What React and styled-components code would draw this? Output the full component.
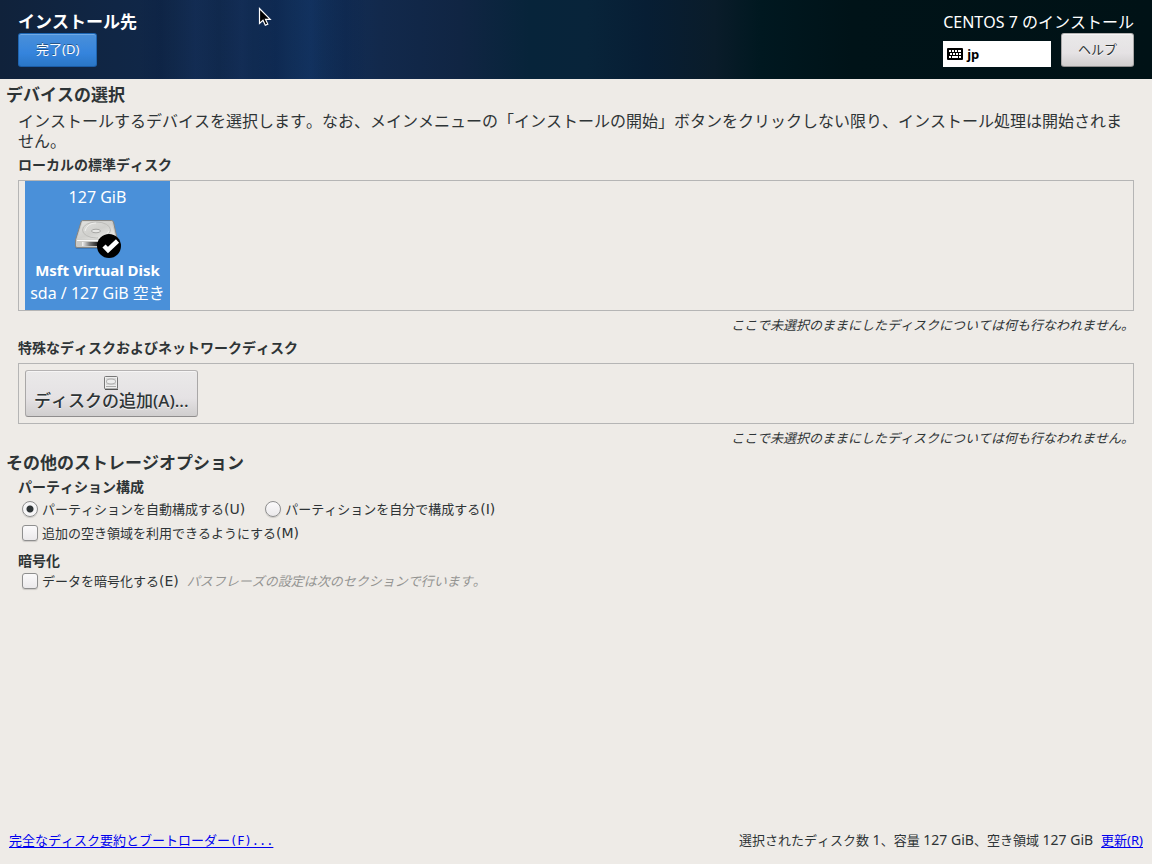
import React, { useState } from "react";
import styled, { createGlobalStyle, css } from "styled-components";

const GlobalStyle = createGlobalStyle`
  *, *::before, *::after { box-sizing: border-box; }
  body {
    margin: 0;
    background: #eeebe7;
    color: #2e3436;
    font-family: "Noto Sans", "Noto Sans CJK JP", sans-serif;
    font-size: 13px;
    font-kerning: none;
    line-height: 20px;
  }
  button, input { font: inherit; color: inherit; margin: 0; font-kerning: inherit; }
`;

const Page = styled.div`
  min-height: 100vh;
  display: flex;
  flex-direction: column;
`;

const Header = styled.header`
  position: relative;
  display: flex;
  justify-content: space-between;
  min-height: 79px;
  padding: 11px 18px 12px;
  color: #fff;
  background:
    linear-gradient(90deg, transparent 12%, rgba(0, 16, 50, 0.12) 14%, transparent 15%, rgba(50, 90, 170, 0.08) 17%, transparent 19%, rgba(50, 80, 150, 0.08) 21%, transparent 22%, rgba(0, 20, 60, 0.12) 24%, transparent 25%, rgba(50, 90, 170, 0.06) 27%, transparent 28%, rgba(0, 20, 60, 0.12) 30%, transparent 32%),
    linear-gradient(90deg, #10223b 0, #102645 10%, #10294e 20%, #102f5a 27%, #12294c 33%, #102543 40%, #07243a 46%, #08243a 51%, #071e34 56%, #0a1c2a 62%, #001820 66%, #001318 74%, #001216 100%);
`;

const HeaderSide = styled.div`
  display: flex;
  flex-direction: column;
  align-items: flex-start;
`;

const PageTitle = styled.h1`
  margin: 0;
  font-size: 17px;
  line-height: 22px;
  font-weight: 700;
`;

const ProductName = styled.div`
  font-size: 16px;
  line-height: 22px;
`;

const HeaderControls = styled.div`
  display: flex;
  align-self: stretch;
  align-items: flex-end;
  justify-content: space-between;
  gap: 9px;
`;

const variants = {
  primary: css`
    padding: 0 17px 2px;
    color: #fff;
    border-color: #1c66b4 #1f65b0 #1b5ca6;
    background: linear-gradient(#4a90d9, #3584dd 60%, #2a76c6);
    box-shadow: inset 0 1px #70aae6;
    text-shadow: 0 -1px rgba(0, 0, 0, 0.4);
  `,
  plain: css`
    padding: 0 16px 2px;
    color: #2e3436;
    border-color: #b5b3b3 #a9a7a7 #8f8d8d;
    background: linear-gradient(#eae9e9, #e5e2e4 60%, #d0cece);
    box-shadow: inset 0 1px #f6f5f5;
    text-shadow: 0 1px rgba(255, 255, 255, 0.7);
  `,
};

const Button = styled.button`
  height: 34px;
  border: 1px solid;
  border-radius: 3px;
  ${({ $variant }) => variants[$variant]}
`;

const AddButton = styled(Button)`
  display: flex;
  flex-direction: column;
  align-items: center;
  height: 47px;
  padding: 4px 8px 0;
  font-size: 17px;
  font-weight: 500;
  line-height: 20px;
`;

const KeyboardLayout = styled.button`
  display: flex;
  align-items: center;
  gap: 4px;
  width: 108px;
  height: 26px;
  padding: 0 4px;
  border: 0;
  background: #fff;
  color: #000;
  font-weight: 700;
`;

const Pointer = styled.svg`
  position: absolute;
  left: 258px;
  top: 7px;
  pointer-events: none;
`;

const Main = styled.main`
  flex: 1;
  padding: 4px 18px 20px;
`;

const SectionTitle = styled.h2`
  margin: 0 0 ${({ $gap }) => $gap}px -12px;
  font-size: 17px;
  line-height: 24px;
  font-weight: 700;
`;

const Intro = styled.p`
  margin: 0 8px 4px 0;
  font-size: 16px;
  line-height: 20px;
`;

const GroupTitle = styled.h3`
  margin: 0 0 ${({ $gap = 0 }) => $gap}px;
  font-size: 14px;
  line-height: 20px;
  font-weight: 700;
`;

const DiskArea = styled.div`
  display: flex;
  border: 1px solid #b5b5b5;
  padding: ${({ $inset = 0 }) => $inset}px 6px;
`;

const Note = styled.p`
  margin: 4px 0 3px;
  font-style: italic;
  text-align: right;
`;

const DiskCard = styled.button`
  display: flex;
  flex-direction: column;
  align-items: center;
  justify-content: flex-start;
  width: 145px;
  height: 129px;
  padding: 4px 0;
  border: 0;
  background: #4a90d9;
  color: #fff;
  font-size: 16px;
  line-height: 24px;
  white-space: nowrap;
`;

const DiskName = styled.strong`
  font-size: 15px;
  line-height: 22px;
  font-weight: 700;
`;

const OptionRow = styled.div`
  display: flex;
  align-items: center;
  min-height: ${({ $compact }) => ($compact ? 20 : 24)}px;
  padding-left: 4px;
  gap: ${({ $gap = 0 }) => $gap}px;
`;

const Option = styled.label`
  display: flex;
  align-items: center;
  gap: 4px;
`;

const Tick = styled.input`
  appearance: none;
  width: 16px;
  height: 16px;
  flex: none;
  border: 1px solid #8f8f8f;
  border-radius: ${({ type }) => (type === "radio" ? "50%" : "3px")};
  background: linear-gradient(#fbfafb, #ebe9eb);
  box-shadow: 0 1px 1px rgba(0, 0, 0, 0.15);

  &[type="radio"]:checked {
    background: radial-gradient(circle, #2e3436 0 2px, #2e3436 3px, #f6f5f6 4px);
  }
  &[type="checkbox"]:checked {
    background: linear-gradient(135deg, #2e3436, #555);
  }
`;

const Mnemonic = styled.span`
  font-family: "DejaVu Sans", sans-serif;
  font-size: 14px;
  line-height: 16px;
`;

const FixedMnemonic = styled.span`
  font-family: "DejaVu Sans Mono", monospace;
  font-size: 12px;
`;

const Figure = styled.span`
  font-size: 14px;
`;

const Hint = styled.em`
  color: #949492;
`;

const Groups = styled.section`
  display: flex;
  flex-direction: column;
  gap: 6px;
`;

const Footer = styled.footer`
  display: flex;
  justify-content: space-between;
  padding: 0 9px 13px;
`;

const Summary = styled.div`
  display: flex;
  gap: 8px;
`;

const Link = styled.a`
  color: #0000ee;
  text-underline-offset: 2px;
`;

function KeyboardIcon() {
  return (
    <svg width="16" height="12" viewBox="0 0 16 12" aria-hidden="true">
      <rect width="16" height="12" rx="1" fill="#000" />
      <path
        fill="#fff"
        d="M2 2h2v2H2zM5 2h2v2H5zM8 2h2v2H8zM11 2h3v2h-3zM3 5h2v2H3zM6 5h2v2H6zM9 5h2v2H9zM12 5h2v2h-2zM2 8h2v2H2zM5 8h6v2H5zM12 8h2v2h-2z"
      />
    </svg>
  );
}

function PointerIcon() {
  return (
    <Pointer width="14" height="20" viewBox="0 0 14 20" aria-hidden="true">
      <path d="M1.5 1.5v15l3.5-3.2 2.3 5 2.5-1.2-2.3-4.8h4.7z" fill="#000" stroke="#fff" strokeWidth="1.2" />
    </Pointer>
  );
}

function DiskIcon() {
  return (
    <svg width="50" height="50" viewBox="0 0 50 50" aria-hidden="true">
      <defs>
        <linearGradient id="diskTop" x1="0" y1="0" x2="1" y2="1">
          <stop offset="0" stopColor="#e3e3e1" />
          <stop offset=".5" stopColor="#d0d0cd" />
          <stop offset="1" stopColor="#f2f2f0" />
        </linearGradient>
        <linearGradient id="diskFront" x1="0" x2="1">
          <stop offset="0" stopColor="#f5f5f5" />
          <stop offset=".25" stopColor="#777" />
          <stop offset=".5" stopColor="#222" />
          <stop offset="1" stopColor="#999" />
        </linearGradient>
      </defs>
      <path d="M2 37l1 3h41l1-4z" fill="#2a5a91" opacity=".45" />
      <path d="M9.500 11.500h29q1.500 0 2 1.500l4 18v6q0 1.500-1.500 1.500H4q-1.500 0-1.500-1.500v-6l5.500-18q.4-1.500 1.500-1.500z" fill="#c9c9c6" stroke="#858583" />
      <path d="M9.500 12.500h29l4.500 18H4z" fill="url(#diskTop)" />
      <ellipse cx="23.500" cy="21" rx="14" ry="8" fill="none" stroke="#bcbcb9" />
      <path d="M12 22q2-8 11-8M36 22q-3 6-11 7" fill="none" stroke="#f0f0ee" />
      <ellipse cx="23" cy="22" rx="4.500" ry="1.800" fill="#e6e6e4" stroke="#a7a7a5" />
      <path d="M4 31.500h39" stroke="#fafafa" />
      <rect x="9" y="33" width="31" height="4" fill="url(#diskFront)" />
      <circle cx="36" cy="37" r="12" fill="#000" />
      <path d="M31 37l4 4 9.500-9" fill="none" stroke="#fff" strokeWidth="4.500" />
    </svg>
  );
}

function SmallDiskIcon() {
  return (
    <svg width="16" height="16" viewBox="0 0 16 16" aria-hidden="true">
      <rect x="1.500" y="1.500" width="13" height="12.500" rx="1" fill="#eee" stroke="#777" />
      <rect x="3" y="3" width="10" height="7" fill="#d8d8d8" />
      <ellipse cx="8" cy="6.500" rx="4.500" ry="2.500" fill="#ededed" stroke="#aaa" />
      <path d="M3 11.500h10" stroke="#aaa" />
      <path d="M2 14.500h13" stroke="#555" />
    </svg>
  );
}

export default function App() {
  const [selected, setSelected] = useState(true);
  return (
    <Page>
      <GlobalStyle />
      <Header>
        <HeaderSide>
          <PageTitle>インストール先</PageTitle>
          <Button type="button" $variant="primary">完了(D)</Button>
        </HeaderSide>
        <HeaderSide>
          <ProductName>CENTOS 7 のインストール</ProductName>
          <HeaderControls>
            <KeyboardLayout type="button"><KeyboardIcon />jp</KeyboardLayout>
            <Button type="button" $variant="plain">ヘルプ</Button>
          </HeaderControls>
        </HeaderSide>
        <PointerIcon />
      </Header>

      <Main>
        <SectionTitle $gap={4}>デバイスの選択</SectionTitle>
        <Intro>
          インストールするデバイスを選択します。なお、メインメニューの「インストールの開始」ボタンをクリックしない限り、インストール処理は開始されません。
        </Intro>
        <GroupTitle $gap={5}>ローカルの標準ディスク</GroupTitle>
        <DiskArea>
          <DiskCard type="button" aria-pressed={selected} onClick={() => setSelected(!selected)}>
            <span>127 GiB</span>
            <DiskIcon />
            <DiskName>Msft Virtual Disk</DiskName>
            <span>sda / 127 GiB 空き</span>
          </DiskCard>
        </DiskArea>
        <Note>ここで未選択のままにしたディスクについては何も行なわれません。</Note>
        <GroupTitle $gap={5}>特殊なディスクおよびネットワークディスク</GroupTitle>
        <DiskArea $inset={6}>
          <AddButton type="button" $variant="plain">
            <SmallDiskIcon />
            ディスクの追加(A)...
          </AddButton>
        </DiskArea>
        <Note>ここで未選択のままにしたディスクについては何も行なわれません。</Note>

        <SectionTitle $gap={2}>その他のストレージオプション</SectionTitle>
        <Groups>
          <div>
            <GroupTitle>パーティション構成</GroupTitle>
            <OptionRow $gap={20}>
              <Option>
                <Tick type="radio" name="partitioning" defaultChecked />
                <span>パーティションを自動構成する<Mnemonic>(U)</Mnemonic></span>
              </Option>
              <Option>
                <Tick type="radio" name="partitioning" />
                <span>パーティションを自分で構成する<Mnemonic>(I)</Mnemonic></span>
              </Option>
            </OptionRow>
            <OptionRow>
              <Option>
                <Tick type="checkbox" />
                <span>追加の空き領域を利用できるようにする<Mnemonic>(M)</Mnemonic></span>
              </Option>
            </OptionRow>
          </div>
          <div>
            <GroupTitle>暗号化</GroupTitle>
            <OptionRow $gap={8} $compact>
              <Option>
                <Tick type="checkbox" />
                <span>データを暗号化する<Mnemonic>(E)</Mnemonic></span>
              </Option>
              <Hint>パスフレーズの設定は次のセクションで行います。</Hint>
            </OptionRow>
          </div>
        </Groups>
      </Main>

      <Footer>
        <Link href="#summary">完全なディスク要約とブートローダー<FixedMnemonic>(F)...</FixedMnemonic></Link>
        <Summary>
          <span>
            選択されたディスク数<Figure> 1</Figure>、容量<Figure> 127 GiB</Figure>、空き領域<Figure> 127 GiB</Figure>
          </span>
          <Link href="#refresh">更新(R)</Link>
        </Summary>
      </Footer>
    </Page>
  );
}
